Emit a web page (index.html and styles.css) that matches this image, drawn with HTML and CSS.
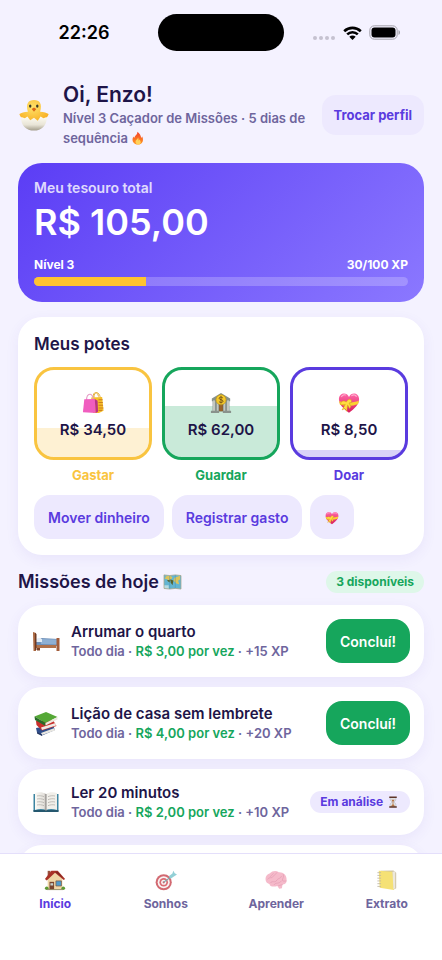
FILE: index.html
```html
<!DOCTYPE html>
<html lang="pt-BR">
<head>
    <meta charset="UTF-8">
    <meta name="viewport" content="width=device-width, initial-scale=1.0">
    <title>Meu tesouro</title>
    <link rel="stylesheet" href="styles.css">
</head>
<body>
    <!-- Ícones -->
    <svg class="sprite" aria-hidden="true">
        <defs>
            <linearGradient id="g-heart" x1="0" y1="0" x2="0" y2="1">
                <stop offset="0" stop-color="#ff6aa9"/>
                <stop offset="1" stop-color="#d91c5c"/>
            </linearGradient>
            <linearGradient id="g-shell" x1="0" y1="0" x2="0" y2="1">
                <stop offset="0" stop-color="#fffdf3"/>
                <stop offset="0.6" stop-color="#e8e4d6"/>
                <stop offset="1" stop-color="#a39d8b"/>
            </linearGradient>
            <radialGradient id="g-chick" cx="0.45" cy="0.3" r="0.7">
                <stop offset="0" stop-color="#ffe36b"/>
                <stop offset="1" stop-color="#f7a91b"/>
            </radialGradient>
            <linearGradient id="g-fire" x1="0" y1="0" x2="0" y2="1">
                <stop offset="0" stop-color="#f4402c"/>
                <stop offset="1" stop-color="#ff9a1f"/>
            </linearGradient>
            <linearGradient id="g-page" x1="0" y1="0" x2="1" y2="0">
                <stop offset="0" stop-color="#fbfaf6"/>
                <stop offset="0.8" stop-color="#e4e1dc"/>
                <stop offset="1" stop-color="#b5b1ac"/>
            </linearGradient>
        </defs>
        <symbol id="i-chick" viewBox="0 0 32 34">
            <path d="M8 22C4 22 1 19 .5 16c2-1.500 5-2.500 9-2.500C7 5 10 1 16 1s9 4 6.500 12.500c4 0 7 1 9 2.500-.5 3-3.500 6-7.500 6l-1 5H9z" fill="url(#g-chick)"/>
            <path d="M2.500 19l3.800 1.500L9 18.500l3 4 4-2.500 4 3 3-4.500 3 2 3.500-1.500C30 28 24 33.500 16 33.500S1.500 28 2.500 19z" fill="url(#g-shell)"/>
            <ellipse cx="12" cy="7.500" rx="1.300" ry="1.700" fill="#37382a"/>
            <ellipse cx="19.500" cy="7.500" rx="1.300" ry="1.700" fill="#37382a"/>
            <path d="M13.500 10.500l2.500-1.500 2.500 1.500-2.500 3z" fill="#dc6716"/>
        </symbol>
        <symbol id="i-fire" viewBox="0 0 16 18">
            <path d="M7 1c1 3-3 5-4 8L2 7C-1 13 3 17.500 8 17.500S16 13 13.500 7L12 9c0-3-2-6-5-8z" fill="url(#g-fire)"/>
            <path d="M8 8c0 3-4 3-3 7 1 3 6 3 6.500 0 .3-2-1-2.500-1-4-1 0-1 1-1.500 1.500C8.500 11 9 9.500 8 8z" fill="#ffd25a"/>
        </symbol>
        <symbol id="i-bags" viewBox="0 0 24 24">
            <path d="M13 6.500c0-8 6-7.500 7 0M12 6C12-1 17-1 18 5" fill="none" stroke="#e0a92d" stroke-width="1"/>
            <path d="M10 6l12-.5 1.500 15-5 2.500H12z" fill="#f6bd27"/>
            <path d="M18 8.500h4.500M18 11.500h4.700M18 14.500h5M18 17.500h5.300M18 20h4" stroke="#ca7f21" stroke-width="1.200"/>
            <path d="M5 9C5 .5 12 .5 12 8" fill="none" stroke="#e59cc6" stroke-width="1.200"/>
            <path d="M2.500 8l11.500-.500 1 15.500L1 22z" fill="#f05dbf"/>
            <path d="M14 7.500l3 2 .5 12L15 23z" fill="#b83089"/>
        </symbol>
        <symbol id="i-bank" viewBox="0 0 24 24">
            <path d="M2 7l10-6 10 6v3H2z" fill="#87928b"/>
            <path d="M3 9h18v12H3z" fill="#515e5b"/>
            <path d="M3 9h3v12H3zM7 9h2.500v12H7zM14.500 9H17v12h-2.500zM18 9h3v12h-3z" fill="#c3c8c0"/>
            <path d="M10 14h4v7h-4z" fill="#99622a"/>
            <path d="M1 20.500h9V23H1zM14 20.500h9V23h-9z" fill="#89928c"/>
            <circle cx="12" cy="8.500" r="5.500" fill="#f4c82a" stroke="#bf9517" stroke-width=".8"/>
            <path d="M14 6.500c-1-1.400-4-1.200-4 .4 0 2 4.200 1 4.200 3.200 0 1.700-3.200 1.800-4.400.4M12 4.500v8" fill="none" stroke="#715015" stroke-width="1"/>
        </symbol>
        <symbol id="i-heart" viewBox="0 0 24 24">
            <path d="M12 22.500C6 18.500 1 13.500 1 8c0-7 8.500-8.500 11-2.500C14.500-.5 23 1 23 8c0 5.500-5 10.500-11 14.500z" fill="url(#g-heart)"/>
            <path d="M1.200 10c7 2 15 2 21.600-.5L22 13c-6 2.500-14 2.700-20 .5z" fill="#f9d12f"/>
            <path d="M9 11C6 8 2 11 3 14l5-.5-3.500 6L7.500 18l2 3 1-7 2 4 1.500-2-2-4 2.500-.500c1-4-3-5-5.500-.5z" fill="#ffdd42" stroke="#d89d18" stroke-width=".6"/>
            <path d="M4 5c1-2 3-2.300 4-1.700M15 4c2-1.500 4-.8 5 .8" fill="none" stroke="#ffb0cf" stroke-width="1.200" stroke-linecap="round"/>
        </symbol>
        <symbol id="i-map" viewBox="0 0 20 18">
            <path d="M1 2l6 .700 6-.700 6 .700V17l-6-.700-6 .700-6-.700z" fill="#62b5d2"/>
            <path d="M3 3.500l5-.5 2 2-2 2-1 3-2-3-3-1zM12 5l6-2v4l-2 1 1 4-3-1-3-3z" fill="#ddc45a"/>
            <path d="M8 7l3 1-1 5-2-3zM4 8l4-1-1 3z" fill="#56632f"/>
            <path d="M1 13h5v4H1z" fill="#b6dce2"/>
            <path d="M7 3v14M13 2v14" stroke="#4b92af" stroke-width=".5"/>
            <path d="M1 2l6 .700 6-.700 6 .700V17l-6-.700-6 .700-6-.700z" fill="none" stroke="#a9a58a" stroke-width=".8"/>
        </symbol>
        <symbol id="i-bed" viewBox="0 0 28 28">
            <path d="M4 13l5-2 17 1v7H4z" fill="#6d8fb8"/>
            <path d="M8 12l18 .5v5L9 17z" fill="#8eb0d4"/>
            <path d="M4 12.500c2-2 5-1.800 6 0V15H4z" fill="#e4edf6"/>
            <path d="M4 18h20v3H4z" fill="#b0714a"/>
            <path d="M1 5l3 1v18H1.500z" fill="#a9663f"/>
            <path d="M3 6l1.500 1v16H3z" fill="#6d3a24"/>
            <path d="M24.500 11h3v13h-3z" fill="#a35d3b"/>
            <path d="M5 21h3v2.500H5z" fill="#7e452b"/>
        </symbol>
        <symbol id="i-books" viewBox="0 0 28 28">
            <path d="M4 19l17-3 2 5-13 5.500-5-3z" fill="#304e8b"/>
            <path d="M9 24l13.500-5 .5 2.500L10 26z" fill="#e9e7e1"/>
            <path d="M4 12l17-1 3.500 6L10 21.500 4.500 16z" fill="#c92f2c"/>
            <path d="M9 18.500l14.500-4.500.5 2.500L10 21z" fill="#f0eae4"/>
            <path d="M2.500 7.500L14 3l11.500 5-12 6z" fill="#55a836"/>
            <path d="M2.500 7.500l11 6.500v3L3 11z" fill="#276b29"/>
            <path d="M13.500 14l12-6v2.500l-12 6z" fill="#eceae0"/>
            <path d="M5 23l5 2.500V27l-5-2.500z" fill="#23345f"/>
        </symbol>
        <symbol id="i-book" viewBox="0 0 28 28">
            <path d="M1.500 6h25v17.500h-25z" fill="#3c84a1"/>
            <path d="M1.500 22h25v2h-25z" fill="#25586f"/>
            <path d="M3 5c4-1.500 8-1 11 1v16c-3-1.500-7-1.500-11 0z" fill="url(#g-page)"/>
            <path d="M25 5c-4-1.500-8-1-11 1v16c3-1.500 7-1.500 11 0z" fill="#f1efea"/>
            <path d="M5 8c2-.5 5-.3 7 .7M5 11c2-.5 5-.3 7 .7M5 14c2-.5 5-.3 7 .7M5 17c2-.5 5-.3 7 .7M16 8.700c2-1 5-1.200 7-.7M16 11.700c2-1 5-1.200 7-.7M16 14.700c2-1 5-1.200 7-.7M16 17.700c2-1 5-1.200 7-.7" fill="none" stroke="#aaa7a2" stroke-width=".7"/>
            <path d="M14 6v17" stroke="#8c8986" stroke-width="1"/>
        </symbol>
        <symbol id="i-glass" viewBox="0 0 12 16">
            <path d="M2 2h8c0 4-1 5-3 6 2 1 3 2 3 6H2c0-4 1-5 3-6-2-1-3-2-3-6z" fill="#dfe0e4" stroke="#a2a0aa" stroke-width=".5"/>
            <path d="M4 5h4L6.500 7.500V11L9 14H3l2.500-3V7.500z" fill="#b67446"/>
            <path d="M1 .5h10v2H1zM1 13.500h10v2H1z" fill="#5d3528"/>
        </symbol>
        <symbol id="i-house" viewBox="0 0 24 24">
            <path d="M4 9l8-7 8 7v13.500H4z" fill="#efd6a6"/>
            <path d="M4 2h3v6H4z" fill="#99513d"/>
            <path d="M1 11L8 2h7l8 9-1.500 1L12 4 3 12.500z" fill="#a93227"/>
            <path d="M7 3h8l6 7-9-7z" fill="#7c2722"/>
            <path d="M6 14h5v8.500H6z" fill="#79452e"/>
            <path d="M7 15.500h3V18H7z" fill="#c4d1cf"/>
            <path d="M13 13h6v5.500h-6z" fill="#4c9bcc" stroke="#805841" stroke-width=".8"/>
            <circle cx="3" cy="21" r="2" fill="#5f9a35"/>
            <circle cx="21" cy="21" r="2" fill="#5f9a35"/>
            <path d="M3 22h18v1H3z" fill="#8f8a65"/>
        </symbol>
        <symbol id="i-target" viewBox="0 0 24 24">
            <circle cx="9.500" cy="14.500" r="8.800" fill="#c02b36"/>
            <circle cx="9.500" cy="14.500" r="6.600" fill="#f7eeee"/>
            <circle cx="9.500" cy="14.500" r="4.700" fill="#cb2e3a"/>
            <circle cx="9.500" cy="14.500" r="2.800" fill="#f7eeee"/>
            <circle cx="9.500" cy="14.500" r="1.200" fill="#b92832"/>
            <path d="M9.500 14.500L18 8" stroke="#4a858b" stroke-width="1.200"/>
            <path d="M15 8l4-3 1-3 1.500 2.500L24 6l-3 2-4 2.500z" fill="#65bdc6"/>
        </symbol>
        <symbol id="i-brain" viewBox="0 0 24 24">
            <path d="M2 15C-1 11 1 6 5 5c3-3 7-3.500 10-1.500C20 3 24 7 23.500 12c.5 3-1.500 5-4.500 5l-.5 4-3 .5-2-3C9 20 5 19 5 16.500z" fill="#f29db5"/>
            <path d="M3 11c2-3 4 0 6-3s3-2 4-4M6 15c2-3 5 1 7-3 1-2 4-1 5-4M10 17c2-3 5 0 8-4M9 5c-1 2-3 2-3 3M20 6c1 3-1 4-1 6s3 1 4 1M15 18c2 0 3-1 4-1" fill="none" stroke="#d4708f" stroke-width=".7" stroke-linecap="round"/>
        </symbol>
        <symbol id="i-ledger" viewBox="0 0 24 24">
            <path d="M5 2l14-.5L22 4v17l-3 1.500z" fill="#b8a779"/>
            <path d="M3 2l15 1 1.500 20L4 20.500z" fill="#f1d53c"/>
            <path d="M18 3l3-.5V21l-2 1z" fill="#e5dfce"/>
            <path d="M1.500 4h4M1.500 7h4M1.500 10h4M1.500 13h4M1.500 16h4M1.500 19h4" stroke="#a4967a" stroke-width=".9"/>
        </symbol>
    </svg>

    <div class="app">
        <!-- Barra de status -->
        <div class="status-bar">
            <div class="status-time">22:26</div>
            <div class="island"></div>
            <div class="status-icons">
                <svg class="dots" viewBox="0 0 23 4" aria-hidden="true">
                    <circle cx="2" cy="2" r="2"/><circle cx="8" cy="2" r="2"/><circle cx="14" cy="2" r="2"/><circle cx="20" cy="2" r="2"/>
                </svg>
                <svg class="wifi" viewBox="0 0 19 14" aria-hidden="true">
                    <path d="M1.200 5.200C6 .7 13 .7 17.800 5.200M4.200 8.400c3-2.900 7.600-2.900 10.600 0" fill="none" stroke="#000" stroke-width="2.600"/>
                    <path d="M9.500 14l-3.200-3.300c1.800-1.700 4.600-1.700 6.400 0z"/>
                </svg>
                <svg class="battery" viewBox="0 0 32 15" aria-hidden="true">
                    <rect x=".8" y=".8" width="27.400" height="13.400" rx="4.500" fill="none" stroke="#a3a1aa" stroke-width="1"/>
                    <rect x="2.500" y="2.500" width="24" height="10" rx="3"/>
                    <path d="M29.500 5v5c2-.8 2-4.200 0-5z" fill="#a3a1aa"/>
                </svg>
            </div>
        </div>

        <main class="content">
            <!-- Perfil -->
            <header class="profile">
                <svg class="icon icon-avatar" aria-hidden="true"><use href="#i-chick"/></svg>
                <div class="profile-text">
                    <h1>Oi, Enzo!</h1>
                    <p>Nível 3 Caçador de Missões · 5 dias de sequência <svg class="icon icon-inline" aria-hidden="true"><use href="#i-fire"/></svg></p>
                </div>
                <button type="button" class="btn btn-small">Trocar perfil</button>
            </header>

            <!-- Tesouro -->
            <section class="treasure">
                <p class="treasure-label">Meu tesouro total</p>
                <p class="treasure-value">R$ 105,00</p>
                <div class="level">
                    <span>Nível 3</span>
                    <span>30/100 XP</span>
                </div>
                <div class="bar">
                    <div class="bar-fill" style="width: 30%"></div>
                </div>
            </section>

            <!-- Potes -->
            <section class="card">
                <h2>Meus potes</h2>
                <div class="pots">
                    <div class="pot pot-spend">
                        <div class="pot-box">
                            <div class="pot-fill" style="height: 33%"></div>
                            <svg class="icon icon-pot" aria-hidden="true"><use href="#i-bags"/></svg>
                            <span class="pot-value">R$ 34,50</span>
                        </div>
                        <span class="pot-name">Gastar</span>
                    </div>
                    <div class="pot pot-save">
                        <div class="pot-box">
                            <div class="pot-fill" style="height: 59%"></div>
                            <svg class="icon icon-pot" aria-hidden="true"><use href="#i-bank"/></svg>
                            <span class="pot-value">R$ 62,00</span>
                        </div>
                        <span class="pot-name">Guardar</span>
                    </div>
                    <div class="pot pot-give">
                        <div class="pot-box">
                            <div class="pot-fill" style="height: 8%"></div>
                            <svg class="icon icon-pot" aria-hidden="true"><use href="#i-heart"/></svg>
                            <span class="pot-value">R$ 8,50</span>
                        </div>
                        <span class="pot-name">Doar</span>
                    </div>
                </div>
                <div class="actions">
                    <button type="button" class="btn">Mover dinheiro</button>
                    <button type="button" class="btn">Registrar gasto</button>
                    <button type="button" class="btn btn-icon" aria-label="Doar"><svg class="icon icon-inline" aria-hidden="true"><use href="#i-heart"/></svg></button>
                </div>
            </section>

            <!-- Missões -->
            <section class="missions">
                <div class="missions-head">
                    <h2>Missões de hoje <svg class="icon icon-map" aria-hidden="true"><use href="#i-map"/></svg></h2>
                    <span class="pill pill-green">3 disponíveis</span>
                </div>
                <ul class="mission-list">
                    <li class="mission">
                        <svg class="icon icon-mission" aria-hidden="true"><use href="#i-bed"/></svg>
                        <div class="mission-text">
                            <h3>Arrumar o quarto</h3>
                            <p>Todo dia · <span class="reward">R$ 3,00 por vez</span> · +15 XP</p>
                        </div>
                        <button type="button" class="btn btn-done">Concluí!</button>
                    </li>
                    <li class="mission">
                        <svg class="icon icon-mission" aria-hidden="true"><use href="#i-books"/></svg>
                        <div class="mission-text">
                            <h3>Lição de casa sem lembrete</h3>
                            <p>Todo dia · <span class="reward">R$ 4,00 por vez</span> · +20 XP</p>
                        </div>
                        <button type="button" class="btn btn-done">Concluí!</button>
                    </li>
                    <li class="mission">
                        <svg class="icon icon-mission" aria-hidden="true"><use href="#i-book"/></svg>
                        <div class="mission-text">
                            <h3>Ler 20 minutos</h3>
                            <p>Todo dia · <span class="reward">R$ 2,00 por vez</span> · +10 XP</p>
                        </div>
                        <span class="pill">Em análise <svg class="icon icon-glass" aria-hidden="true"><use href="#i-glass"/></svg></span>
                    </li>
                    <li class="mission"></li>
                </ul>
            </section>
        </main>

        <!-- Navegação -->
        <nav class="tabs">
            <a href="#inicio" class="tab active" aria-current="page">
                <svg class="icon icon-tab" aria-hidden="true"><use href="#i-house"/></svg>
                Início
            </a>
            <a href="#sonhos" class="tab">
                <svg class="icon icon-tab" aria-hidden="true"><use href="#i-target"/></svg>
                Sonhos
            </a>
            <a href="#aprender" class="tab">
                <svg class="icon icon-tab" aria-hidden="true"><use href="#i-brain"/></svg>
                Aprender
            </a>
            <a href="#extrato" class="tab">
                <svg class="icon icon-tab" aria-hidden="true"><use href="#i-ledger"/></svg>
                Extrato
            </a>
        </nav>
    </div>
</body>
</html>
```
FILE: styles.css
```css
:root {
    --bg: #f4f2ff;
    --ink: #1e1548;
    --muted: #6e659d;
    --primary: #5a3bdf;
    --lilac: #ede9fe;
    --green: #16a65c;
    --gold: #f9c440;
}

* {
    box-sizing: border-box;
}

body {
    margin: 0;
    background-color: var(--bg);
    color: var(--ink);
    font-family: Inter, "Noto Sans", sans-serif;
}

h1, h2, h3, p, ul {
    margin: 0;
    padding: 0;
}

.sprite {
    position: absolute;
    width: 0;
    height: 0;
}

.app {
    display: flex;
    flex-direction: column;
    height: 100vh;
}

/* Barra de status */
.status-bar {
    display: grid;
    grid-template-columns: 1fr 126px 1fr;
    align-items: center;
    padding: 14px 0;
}

.status-time {
    padding-left: 10px;
    text-align: center;
    font-size: 18px;
    font-weight: 600;
    color: #000;
}

.island {
    height: 37px;
    border-radius: 19px;
    background-color: #000;
}

.status-icons {
    display: flex;
    align-items: center;
    justify-content: center;
    gap: 7px;
    padding-right: 12px;
}

.dots {
    width: 23px;
    height: 4px;
    margin-top: 10px;
    fill: #c5c2d0;
}

.wifi {
    width: 19px;
    height: 14px;
}

.battery {
    width: 32px;
    height: 15px;
}

/* Conteúdo */
.content {
    flex: 1;
    min-height: 0;
    overflow-y: auto;
    scrollbar-width: none;
    display: flex;
    flex-direction: column;
    gap: 15px;
    padding: 17px 18px 0;
}

.content > * {
    flex-shrink: 0;
}

.icon {
    display: inline-block;
    flex-shrink: 0;
}

.icon-avatar {
    width: 32px;
    height: 32px;
}

.icon-inline {
    width: 14px;
    height: 14px;
    vertical-align: -2px;
}

.icon-map {
    width: 19px;
    height: 17px;
    vertical-align: -2px;
}

.icon-mission {
    width: 28px;
    height: 28px;
}

.icon-glass {
    width: 14px;
    height: 12px;
    vertical-align: -2px;
}

.icon-pot,
.icon-tab {
    width: 22px;
    height: 22px;
}

/* Perfil */
.profile {
    display: flex;
    align-items: center;
    gap: 8px;
}

.profile-text {
    flex: 1;
    padding-left: 5px;
}

.profile h1 {
    font-size: 21px;
    font-weight: 600;
    line-height: 26px;
}

.profile p {
    font-size: 13px;
    font-weight: 600;
    line-height: 20px;
    color: var(--muted);
}

/* Botões */
.btn {
    min-height: 44px;
    padding: 0 14px;
    border: none;
    border-radius: 16px;
    background-color: var(--lilac);
    color: var(--primary);
    font-family: inherit;
    font-size: 14px;
    font-weight: 600;
    white-space: nowrap;
    cursor: pointer;
}

.btn-icon {
    min-width: 44px;
}

.btn-small {
    min-height: 40px;
    padding: 0 12px;
    border-radius: 14px;
    font-size: 13px;
    font-weight: 700;
}

.btn-done {
    background-color: var(--green);
    color: #fff;
}

/* Tesouro */
.treasure {
    padding: 16px;
    border-radius: 24px;
    background: linear-gradient(135deg, #5b3df5, #8b78ff);
    color: #fff;
}

.treasure-label {
    font-size: 14px;
    font-weight: 600;
    line-height: 18px;
    opacity: 0.8;
}

.treasure-value {
    margin: 4px 0 14px;
    font-size: 36px;
    font-weight: 600;
    line-height: 42px;
}

.level {
    display: flex;
    justify-content: space-between;
    font-size: 12px;
    font-weight: 700;
    line-height: 16px;
}

.bar {
    height: 9px;
    margin-top: 4px;
    border-radius: 5px;
    background-color: rgba(255, 255, 255, 0.22);
    overflow: hidden;
}

.bar-fill {
    height: 100%;
    background-color: #ffc330;
}

/* Potes */
.card,
.mission {
    border-radius: 24px;
    background-color: #fff;
    box-shadow: 0 4px 14px rgba(91, 61, 200, 0.07);
}

.card {
    padding: 16px;
}

.card h2 {
    font-size: 17px;
    font-weight: 600;
    line-height: 22px;
}

.pots {
    display: grid;
    grid-template-columns: repeat(3, 1fr);
    gap: 10px;
    margin-top: 12px;
}

.pot {
    display: flex;
    flex-direction: column;
    gap: 6px;
    text-align: center;
    color: var(--pot);
}

.pot-spend {
    --pot: var(--gold);
}

.pot-save {
    --pot: var(--green);
}

.pot-give {
    --pot: var(--primary);
}

.pot-box {
    position: relative;
    display: flex;
    flex-direction: column;
    align-items: center;
    gap: 6px;
    padding: 22px 0 17px;
    border: 3px solid var(--pot);
    border-radius: 20px;
    overflow: hidden;
}

.pot-fill {
    position: absolute;
    right: 0;
    bottom: 0;
    left: 0;
    background-color: var(--pot);
    opacity: 0.23;
}

.icon-pot,
.pot-value {
    position: relative;
}

.pot-value {
    font-size: 15px;
    font-weight: 600;
    line-height: 20px;
    color: var(--ink);
}

.pot-name {
    font-size: 13px;
    font-weight: 700;
    line-height: 18px;
}

.actions {
    display: flex;
    flex-wrap: wrap;
    gap: 8px;
    margin-top: 11px;
}

/* Missões */
.missions-head {
    display: flex;
    align-items: center;
    justify-content: space-between;
}

.missions-head h2 {
    font-size: 18px;
    font-weight: 600;
    line-height: 24px;
}

.pill {
    padding: 0 10px;
    border-radius: 12px;
    background-color: var(--lilac);
    color: var(--primary);
    font-size: 12px;
    font-weight: 700;
    line-height: 22px;
    white-space: nowrap;
}

.pill-green {
    background-color: #def7e9;
    color: var(--green);
}

.mission-list {
    display: flex;
    flex-direction: column;
    gap: 10px;
    margin-top: 11px;
    list-style: none;
}

.mission {
    display: flex;
    align-items: center;
    gap: 11px;
    min-height: 66px;
    padding: 14px;
}

.mission-text {
    flex: 1;
}

.mission h3 {
    font-size: 15px;
    font-weight: 600;
    line-height: 20px;
}

.mission p {
    font-size: 13px;
    font-weight: 600;
    line-height: 18px;
    color: var(--muted);
}

.mission .reward {
    color: var(--green);
}

/* Navegação */
.tabs {
    display: grid;
    grid-template-columns: repeat(4, 1fr);
    padding: 15px 0 48px;
    border-top: 1px solid #e4dffb;
    background-color: #fff;
}

.tab {
    display: flex;
    flex-direction: column;
    align-items: center;
    gap: 5px;
    color: var(--muted);
    font-size: 12px;
    font-weight: 700;
    line-height: 16px;
    text-decoration: none;
}

.tab .icon {
    opacity: 0.7;
}

.tab.active {
    color: var(--primary);
}

.tab.active .icon {
    opacity: 1;
}
```
